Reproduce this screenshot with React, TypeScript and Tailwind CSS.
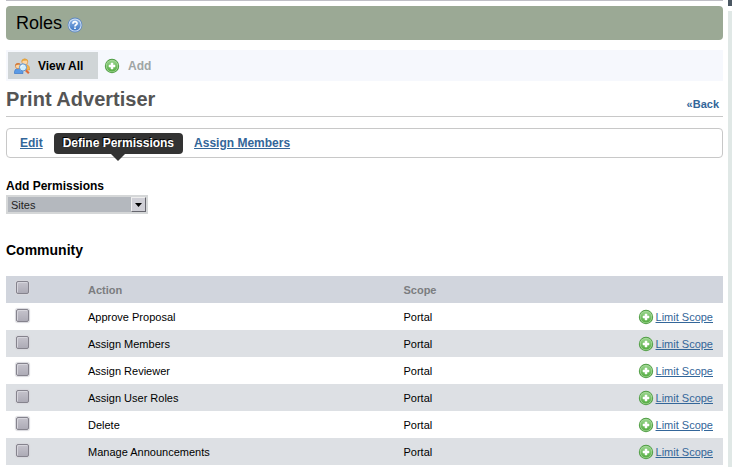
import React from "react";

const actions = [
  "Approve Proposal",
  "Assign Members",
  "Assign Reviewer",
  "Assign User Roles",
  "Delete",
  "Manage Announcements",
];

function AddIcon() {
  return (
    <svg className="size-4 shrink-0" viewBox="0 0 16 16" aria-hidden="true">
      <defs>
        <linearGradient id="add-fill" x1="0" y1="0" x2="0" y2="1">
          <stop offset="0" stopColor="#98d48c" />
          <stop offset="1" stopColor="#55ad42" />
        </linearGradient>
      </defs>
      <circle cx="8" cy="8" r="7.2" fill="#4f9d43" />
      <circle cx="8" cy="8" r="6.2" fill="#a9d99d" />
      <circle cx="8" cy="8" r="5.5" fill="url(#add-fill)" />
      <path d="M7 5h2v2h2v2H9v2H7V9H5V7h2z" fill="#fff" stroke="#fff" strokeWidth=".5" />
    </svg>
  );
}

function HelpIcon() {
  return (
    <svg className="size-4 shrink-0" viewBox="0 0 16 16" aria-hidden="true">
      <defs>
        <linearGradient id="help-fill" x1="0" y1="0" x2="0" y2="1">
          <stop offset="0" stopColor="#8db4e6" />
          <stop offset="1" stopColor="#3f78c4" />
        </linearGradient>
      </defs>
      <circle cx="8" cy="8" r="7.4" fill="#5c86c0" />
      <circle cx="8" cy="8" r="6.6" fill="#cfe0f5" />
      <circle cx="8" cy="8" r="5.6" fill="url(#help-fill)" />
      <path
        d="M5.900 6.700C5.900 3.900 10.200 4 10.100 6.500C10.100 7.900 8 7.700 8 9.400M8 10.400v1.600"
        fill="none"
        stroke="#fff"
        strokeWidth="1.7"
      />
    </svg>
  );
}

function UsersIcon() {
  return (
    <svg className="size-4 shrink-0" viewBox="0 0 16 16" aria-hidden="true">
      <path d="M7.500 10c0-2.500 1-3.500 3.500-3.500s4.500 1.300 4.500 4V12H8z" fill="#f8b54a" stroke="#dc8e2c" strokeWidth=".6" />
      <circle cx="10.800" cy="3.900" r="3" fill="#fcd6a2" stroke="#d08a38" strokeWidth=".6" />
      <path d="M7.500 4C7.200-.2 14.400-.2 14 4L12.800 2.600 9.200 2.800z" fill="#e8a63a" />
      <path d="M.4 15.500c0-3.500 1-5 4-5S9 12 9 15.500z" fill="#5b9be6" stroke="#2f6fc4" strokeWidth=".6" />
      <circle cx="4" cy="8" r="2.700" fill="#fcd6a2" stroke="#c9733a" strokeWidth=".6" />
      <path d="M1.100 8C1.100 4 7 4 6.900 7.600L5.500 6.500 2.800 6.900z" fill="#d07a3c" />
      <path d="M11.500 12l3.400 3.200" stroke="#e06a34" strokeWidth="2.200" />
      <circle cx="9" cy="9.400" r="3.600" fill="#d3effc" stroke="#5d93cf" strokeWidth="1" />
      <path d="M6.900 9.200c.2-1.200 1-1.900 2.200-1.900" fill="none" stroke="#fff" />
    </svg>
  );
}

function Check({ label }: { label: string }) {
  return (
    <input
      type="checkbox"
      aria-label={label}
      className="block size-[13px] appearance-none rounded-[2px] border border-[#85838d] bg-linear-to-b from-[#c5c3cc] to-[#adabb6] shadow-[inset_1px_1px_0_#d6d5dc,0_0_1px_1px_#d8d8dd] checked:bg-[#666]"
    />
  );
}

export default function App() {
  return (
    <div className="flex min-h-screen bg-white font-['Liberation_Sans',Arial,sans-serif] text-[11px] leading-[14px] text-black">
      <main className="ml-1.5 mr-[5px] min-w-0 flex-1">
        <div className="mb-[5px] h-px bg-[#bfbfc6]" />

        <header className="flex h-[34px] items-center gap-[5px] rounded bg-[#9ba995] px-2.5">
          <h1 className="text-[18px] leading-6">Roles</h1>
          <button type="button" aria-label="Help" className="pt-1">
            <HelpIcon />
          </button>
        </header>

        <nav aria-label="Roles toolbar" className="mt-2.5 flex items-center bg-[#f6f8fd] p-0.5 text-xs font-bold">
          <a href="#all" className="flex h-[27px] w-[90px] items-center gap-2 bg-[#d0d5d7] px-1.5">
            <UsersIcon />
            View All
          </a>
          <a href="#add" className="flex h-[27px] items-center gap-2 px-1.5 text-[#9fa5a5]">
            <AddIcon />
            Add
          </a>
        </nav>

        <div className="flex h-9 items-center justify-between border-b border-[#c8c8c8] pr-1">
          <h2 className="text-xl leading-6 font-bold text-[#555]">Print Advertiser</h2>
          <a href="#back" className="pt-2.5 font-bold text-[#336699]">
            «Back
          </a>
        </div>

        <nav
          aria-label="Role sections"
          className="mt-[11px] flex h-[30px] items-center gap-[11px] rounded border border-[#c8c8c8] px-[13px] text-xs leading-[14px] font-bold text-[#336699]"
        >
          <a href="#edit" className="underline">
            Edit
          </a>
          <a
            href="#permissions"
            aria-current="page"
            className="relative rounded bg-[#333] px-[9px] py-1 leading-[13px] text-white [text-shadow:-1px_-1px_0_#000] after:absolute after:top-full after:left-1/2 after:-translate-x-1/2 after:border-x-[7px] after:border-t-[7px] after:border-x-transparent after:border-t-[#333]"
          >
            Define Permissions
          </a>
          <a href="#members" className="underline">
            Assign Members
          </a>
        </nav>

        <div className="mt-[21px]">
          <label htmlFor="add-permissions" className="block text-xs leading-[14px] font-bold">
            Add Permissions
          </label>
          <div className="relative mt-0.5 w-[142px]">
            <select
              id="add-permissions"
              className="block h-[19px] w-full appearance-none border-2 border-[#d5d7d8] bg-[#b4b8be] pl-[3px] text-[11px] leading-[14px] text-[#222]"
            >
              <option>Sites</option>
            </select>
            <span className="pointer-events-none absolute top-0.5 right-0.5 flex h-[15px] w-[15px] items-center justify-center border border-t-[#eee] border-r-[#66666e] border-b-[#66666e] border-l-[#eee] bg-[#cfcfd6]">
              <svg className="h-1 w-[7px]" viewBox="0 0 7 4" aria-hidden="true">
                <path d="M0 0h7L3.500 4z" />
              </svg>
            </span>
          </div>
        </div>

        <h3 className="mt-[26px] text-sm leading-5 font-bold">Community</h3>

        <table className="mt-4 w-full table-fixed border-collapse text-left">
          <thead>
            <tr className="h-[27px] bg-[#d1d5dd] text-[#7b7d80]">
              <th className="w-[82px] pb-1 pl-2.5">
                <Check label="Select all actions" />
              </th>
              <th className="w-[44%]">Action</th>
              <th>Scope</th>
              <th className="w-[120px]" aria-label="Options" />
            </tr>
          </thead>
          <tbody>
            {actions.map((action) => (
              <tr key={action} className="h-[27px] even:bg-[#dde0e4]">
                <td className="pb-[3px] pl-2.5">
                  <Check label={action} />
                </td>
                <td>{action}</td>
                <td>Portal</td>
                <td className="pr-2.5">
                  <a href="#scope" className="flex items-center justify-end gap-0.5 text-[#336699] underline">
                    <AddIcon />
                    Limit Scope
                  </a>
                </td>
              </tr>
            ))}
          </tbody>
        </table>
      </main>

      <aside aria-label="Side panel" className="flex w-1 shrink-0 flex-col gap-[5px]">
        <div className="h-1.5 bg-[#4b5863]" />
        <div className="flex-1 bg-[#e0e8e6]" />
      </aside>
    </div>
  );
}
